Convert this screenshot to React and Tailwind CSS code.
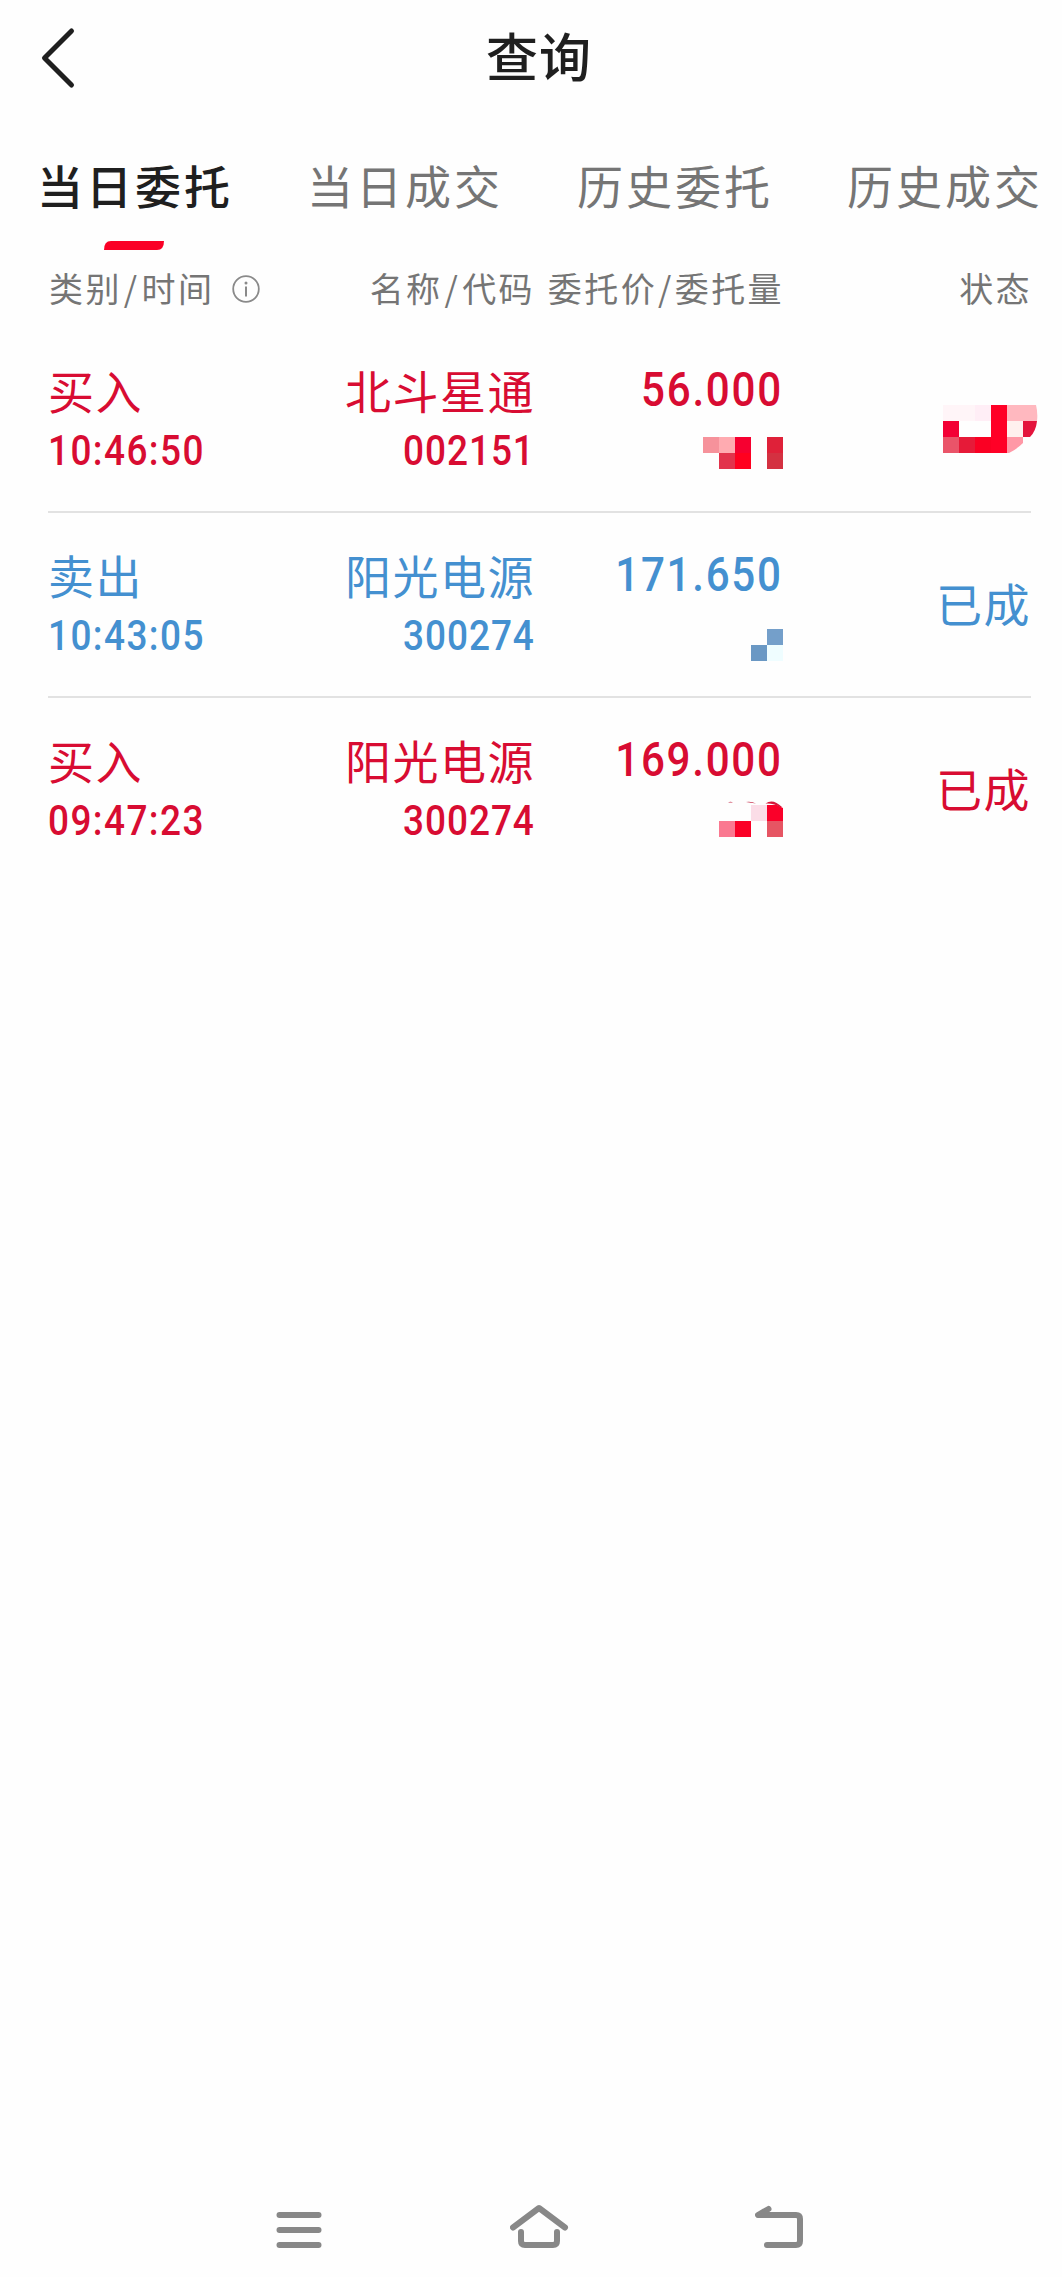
const tabs = ["当日委托", "当日成交", "历史委托", "历史成交"];

const orders = [
  {
    side: "买入",
    time: "10:46:50",
    name: "北斗星通",
    code: "002151",
    price: "56.000",
    status: null,
    color: "text-[#d80c32]",
    mask: <BuyMask />,
  },
  {
    side: "卖出",
    time: "10:43:05",
    name: "阳光电源",
    code: "300274",
    price: "171.650",
    status: "已成",
    color: "text-[#4490d0]",
    mask: <SellMask />,
  },
  {
    side: "买入",
    time: "09:47:23",
    name: "阳光电源",
    code: "300274",
    price: "169.000",
    status: "已成",
    color: "text-[#d80c32]",
    mask: <LastMask />,
  },
];

function BuyMask() {
  return (
    <svg className="mt-[8px]" width="80" height="32" viewBox="0 0 80 32" shapeRendering="crispEdges">
      <rect width="16" height="16" fill="#f6929b" />
      <rect x="16" width="16" height="16" fill="#ffabb1" />
      <rect x="32" width="16" height="16" fill="#f60030" />
      <rect x="64" width="16" height="16" fill="#df2139" />
      <rect x="16" y="16" width="16" height="16" fill="#e2334c" />
      <rect x="32" y="16" width="16" height="16" fill="#ff001f" />
      <rect x="64" y="16" width="16" height="16" fill="#d43141" />
    </svg>
  );
}

function SellMask() {
  return (
    <svg className="mt-[15px]" width="80" height="32" viewBox="0 0 80 32" shapeRendering="crispEdges">
      <rect x="64" width="16" height="16" fill="#749fca" />
      <rect x="48" y="16" width="16" height="16" fill="#6a98c4" />
      <rect x="64" y="16" width="16" height="16" fill="#effdff" />
    </svg>
  );
}

function LastMask() {
  return (
    <svg className="mt-[2px]" width="80" height="36" viewBox="0 0 80 36">
      <path d="M25 1.500 Q27.500 .2 30 1.500 Z M43 1 Q48 0 53 2.500 Z" fill="#c52a48" />
      <rect x="48" y="4" width="16" height="16" fill="#fbdde7" />
      <path d="M64 4 H74 L80 7 V20 H64 Z" fill="#fa0029" />
      <path d="M62.500 2.500 Q70 -3 79 6 L77 6 Q71 2 62.500 2.500 Z" fill="#d5173a" />
      <rect x="16" y="20" width="16" height="16" fill="#fa7890" />
      <rect x="32" y="20" width="16" height="16" fill="#fa0026" />
      <rect x="64" y="20" width="16" height="16" fill="#e65563" />
    </svg>
  );
}

function StatusMask() {
  return (
    <svg width="95" height="48" viewBox="0 0 95 48">
      <rect width="32" height="16" fill="#fff5f8" />
      <rect x="32" width="16" height="16" fill="#ffeef6" />
      <rect y="16" width="16" height="16" fill="#f30035" />
      <rect y="32" width="16" height="16" fill="#ea5469" />
      <rect x="16" y="32" width="16" height="16" fill="#e61a38" />
      <rect x="32" y="32" width="16" height="16" fill="#fa0023" />
      <rect x="48" width="16" height="48" fill="#ff0026" />
      <path d="M64 0 H93 Q95 8 94 16 H64 Z" fill="#ffb8bf" />
      <rect x="64" y="16" width="16" height="16" fill="#fff0ee" />
      <path d="M80 16 H94 Q93 26 87 32 H80 Z" fill="#e4143c" />
      <path d="M64 32 H80 V38 Q74 44 66 48 H64 Z" fill="#ff98a6" />
    </svg>
  );
}

function OrderRow({ order }) {
  return (
    <div className={`flex h-[185px] border-b-2 border-[#e2e2e2] last:border-0 ${order.color}`}>
      <div className="w-[250px] pt-[31px]">
        <div className="h-[60px] text-[46px] leading-[60px] tracking-[1.5px]">{order.side}</div>
        <div className="mt-[7px] h-[50px] origin-left scale-x-[0.88] font-[Roboto] text-[42px] leading-[50px] font-medium tracking-[1.6px] whitespace-nowrap">
          {order.time}
        </div>
      </div>
      <div className="flex w-[236px] flex-col items-end pt-[31px]">
        <div className="-mr-px h-[60px] text-[46px] leading-[60px] tracking-[1.5px]">{order.name}</div>
        <div className="mt-[7px] -mr-px h-[50px] origin-right scale-x-[0.88] font-[Roboto] text-[42px] leading-[50px] font-medium tracking-[1.1px]">
          {order.code}
        </div>
      </div>
      <div className="flex w-[249px] flex-col items-end pt-[32px]">
        <div className="h-[60px] origin-right scale-x-[0.86] font-[Roboto] text-[49px] leading-[60px] font-medium tracking-[2px]">
          {order.price}
        </div>
        <div className="pt-[9px]">{order.mask}</div>
      </div>
      <div className="flex flex-1 justify-end pt-[59px]">
        {order.status ? (
          <div className="text-[46px] leading-[60px] tracking-[1.5px]">{order.status}</div>
        ) : (
          <div className="-mr-[7px] pt-[18px]">
            <StatusMask />
          </div>
        )}
      </div>
    </div>
  );
}

export default function App() {
  return (
    <div className="flex h-[2277px] w-[1062px] flex-col overflow-hidden bg-[#fefefe] font-['Noto_Sans_CJK_SC',sans-serif]">
      <header className="grid h-[116px] grid-cols-3 items-center px-[40px]">
        <svg width="40" height="64" viewBox="0 0 40 64" fill="none" stroke="#1f1f1f" strokeWidth="5" strokeLinecap="round" strokeLinejoin="round">
          <path d="M31.500 5 L4.500 32 L31.500 59" />
        </svg>
        <h1 className="-mt-[7px] pl-[16px] text-center text-[52px] font-medium tracking-[1px] text-[#1f1f1f]">查询</h1>
      </header>

      <nav className="flex h-[136px] gap-[76px] pt-[33px] pl-[38px]">
        {tabs.map((tab, i) => (
          <div key={tab} className="flex w-[194px] flex-col items-center">
            <div
              className={
                i === 0
                  ? "h-[70px] text-[46px] leading-[70px] font-medium tracking-[3px] whitespace-nowrap text-[#1f1f1f]"
                  : "h-[70px] text-[46px] leading-[70px] tracking-[3px] whitespace-nowrap text-[#757575]"
              }
            >
              {tab}
            </div>
            {i === 0 && (
              <svg className="mt-[22px] mr-[2px]" width="60" height="9" viewBox="0 0 60 9">
                <path d="M0 9 Q0 0 7 0 H60 Q60 9 53 9 Z" fill="#fa0026" />
              </svg>
            )}
          </div>
        ))}
      </nav>

      <div className="flex h-[76px] pt-[11px] pr-[30px] pl-[49px] text-[34px] leading-[50px] tracking-[2.4px] text-[#757575]">
        <div className="flex h-[50px] w-[250px] items-center">
          类别<span className="px-[2px]">/</span>时间
          <svg className="mt-px ml-[18px]" width="28" height="28" viewBox="0 0 28 28" fill="none" stroke="#8a8a8a">
            <circle cx="14" cy="14" r="12.800" strokeWidth="1.800" />
            <path d="M14 11.500 V21.500" strokeWidth="2" />
            <circle cx="14" cy="8" r="1.500" fill="#8a8a8a" stroke="none" />
          </svg>
        </div>
        <div className="w-[236px] text-right">
          名称<span className="px-[2px]">/</span>代码
        </div>
        <div className="w-[249px] text-right whitespace-nowrap">
          委托价<span className="px-[1px]">/</span>委托量
        </div>
        <div className="flex-1 text-right">状态</div>
      </div>

      <main className="flex-1 pr-[31px] pl-[48px]">
        {orders.map((order) => (
          <OrderRow key={order.time} order={order} />
        ))}
      </main>

      <footer className="flex h-[90px] items-start justify-between pr-[257px] pl-[275px]">
        <svg width="50" height="70" viewBox="0 0 50 70" fill="none" stroke="#888" strokeWidth="6" strokeLinecap="round">
          <path d="M4.500 28 H43.500 M4.500 43 H43.500 M4.500 58 H43.500" />
        </svg>
        <svg width="60" height="70" viewBox="0 0 60 70" fill="none" stroke="#888" strokeWidth="6" strokeLinecap="round" strokeLinejoin="round">
          <path d="M3 40.500 L29 21 L55 40.500" />
          <path d="M11 45 V54 Q11 58 15 58 H43 Q47 58 47 54 V45" />
        </svg>
        <svg width="50" height="70" viewBox="0 0 50 70" fill="none" stroke="#888" strokeWidth="6" strokeLinecap="round" strokeLinejoin="round">
          <path d="M13.500 22 L3 28 H41 Q45 28 45 32 V54 Q45 58 41 58 H12" />
        </svg>
      </footer>
    </div>
  );
}
